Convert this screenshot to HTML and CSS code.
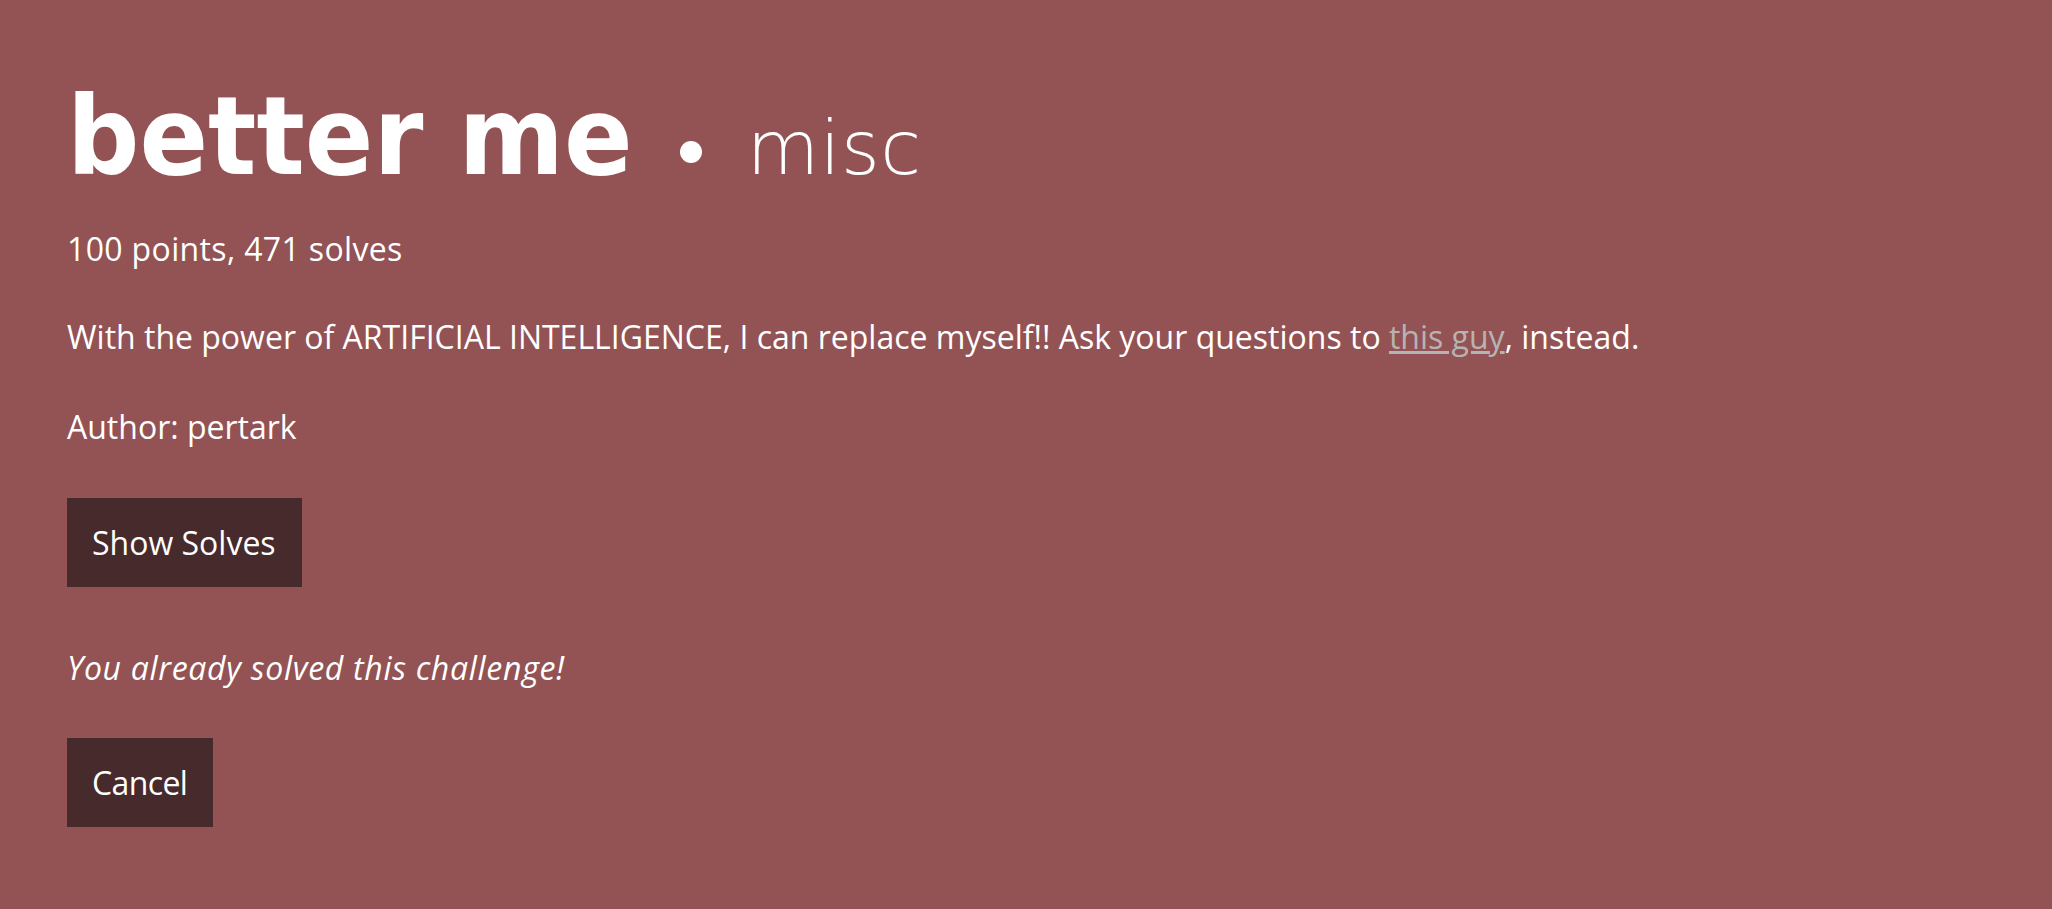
FILE: index.html
```html
<!DOCTYPE html>
<html lang="en">
<head>
<meta charset="utf-8">
<title>better me</title>
<link rel="stylesheet" href="styles.css">
</head>
<body>
<main class="page">
  <h1 class="title"><span class="name">better me</span><span class="dot"></span><span class="cat">misc</span></h1>
  <p class="meta">100 points, 471 solves</p>
  <p class="desc">With the power of ARTIFICIAL INTELLIGENCE, I can replace myself!! Ask your questions to <a class="link" href="#">this guy</a>, instead.</p>
  <p class="author">Author: pertark</p>
  <button class="btn">Show Solves</button>
  <p class="solved">You already solved this challenge!</p>
  <button class="btn btn-cancel">Cancel</button>
</main>
</body>
</html>
```
FILE: styles.css
```css
html, body { margin: 0; padding: 0; }
body {
  background: #935354;
  color: #ffffff;
  font-family: "Open Sans", "Noto Sans", sans-serif;
  min-height: 100vh;
}
.page {
  display: flex;
  flex-direction: column;
  align-items: flex-start;
  padding: 89px 0 0 67px;
}
.title {
  margin: 0;
  display: flex;
  align-items: baseline;
  line-height: 100px;
  font-weight: normal;
}
.name {
  font-family: "DejaVu Sans", sans-serif;
  font-weight: bold;
  font-size: 101.2px;
  transform: scaleY(1.08);
  transform-origin: 0 85px;
}
.dot {
  width: 22px;
  height: 22px;
  border-radius: 50%;
  background: #fff;
  margin: 52px 45px 0 47px;
  align-self: flex-start;
}
.cat {
  font-family: "DejaVu Sans", sans-serif;
  font-weight: 200;
  font-size: 74.4px;
  letter-spacing: 0.6px;
}
.meta, .desc, .author, .solved {
  font-size: 32px;
  line-height: 48px;
  margin: 0;
}
.meta { margin-top: 26px; letter-spacing: 0.35px; }
.desc { margin-top: 40px; }
.author { margin-top: 42px; }
.solved { font-style: italic; margin-top: 57px; letter-spacing: 0.7px; }
.link { color: #b7b3b3; }
.btn {
  font-family: inherit;
  font-size: 32px;
  line-height: 49px;
  color: #fff;
  background: #472a2c;
  border: 0;
  padding: 20px 26px 20px 25px;
  margin-top: 47px;
}
.solved + .btn { margin-top: 46px; }
.btn-cancel { letter-spacing: -0.6px; }
```
